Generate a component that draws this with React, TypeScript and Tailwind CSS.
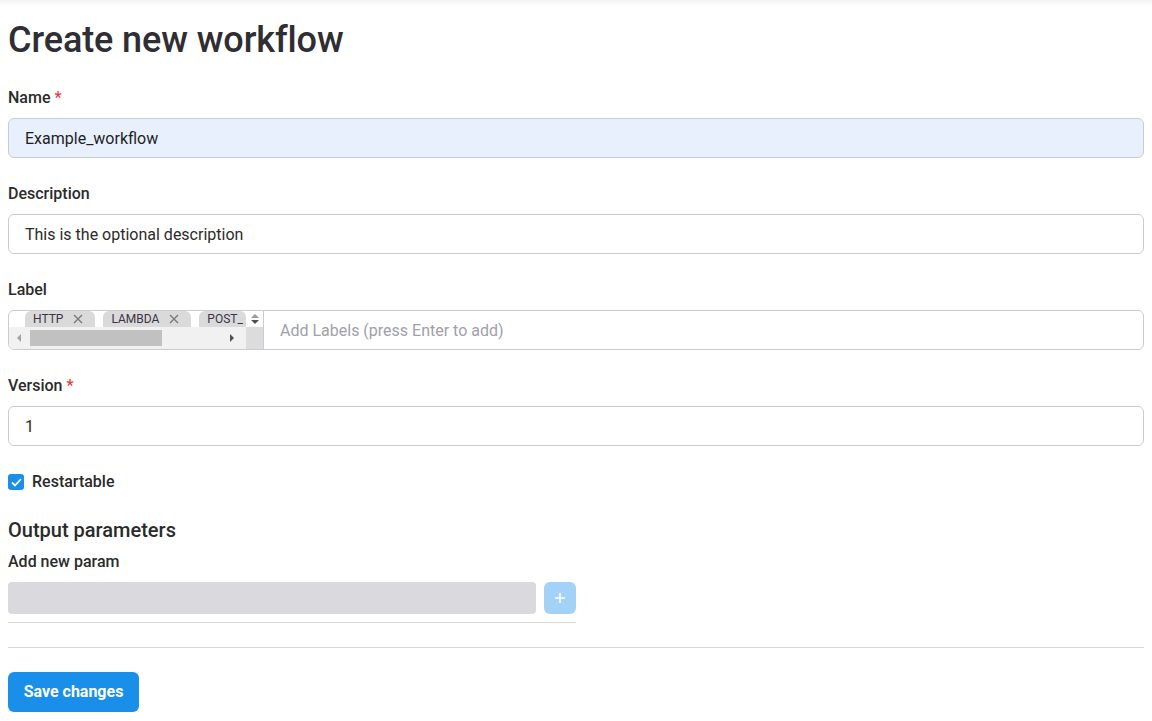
import React from "react";

function Tag({ label, clip }: { label: string; clip?: boolean }) {
  return (
    <div
      className={
        "flex h-[16px] shrink-0 items-center rounded-t-[6px] bg-[#dadada] pl-[8px] text-[12px] leading-none text-[#3b3345] " +
        (clip ? "w-[47px] overflow-hidden" : "pr-[12px]")
      }
    >
      <span>{label}</span>
      {!clip && (
        <svg width="10" height="10" viewBox="0 0 10 10" className="ml-[10px]">
          <path d="M1 1 L9 9 M9 1 L1 9" stroke="#7a7a7a" strokeWidth="1.4" />
        </svg>
      )}
    </div>
  );
}

function Field({
  label,
  required,
  children,
}: {
  label: string;
  required?: boolean;
  children: React.ReactNode;
}) {
  return (
    <div className="flex flex-col">
      <div className="flex h-[24px] items-center text-[16px] font-medium text-[#2b2b2b]">
        {label}
        {required && <span className="ml-[4px] text-[#e5383b]">*</span>}
      </div>
      <div className="mt-[8px]">{children}</div>
    </div>
  );
}

export default function App() {
  return (
    <div
      className="relative min-h-[721px] w-full bg-white"
      style={{ fontFamily: "Roboto, 'Noto Sans', Arial, sans-serif" }}
    >
      <div className="absolute left-0 right-0 top-0 h-[6px] bg-gradient-to-b from-[#f3f3f3] to-white" />
      <div className="relative flex flex-col pl-[8px] pr-[8px] pt-[18px]">
        <h1 className="h-[44px] text-[36px] font-medium leading-[44px] tracking-[-0.1px] text-[#2e2e33]">
          Create new workflow
        </h1>

        <div className="mt-[24px] flex flex-col gap-[24px]">
          <Field label="Name" required>
            <div className="flex h-[40px] items-center rounded-[6px] border border-[#c9ccd1] bg-[#e8f0fe] pl-[16px] pt-[1px] text-[16px] text-[#1f1f1f]">
              Example_workflow
            </div>
          </Field>

          <Field label="Description">
            <div className="flex h-[40px] items-center rounded-[6px] border border-[#c9ccd1] bg-white pl-[16px] pt-[1px] text-[16px] text-[#2b2b2b]">
              This is the optional description
            </div>
          </Field>

          <Field label="Label">
            <div className="flex h-[40px] overflow-hidden rounded-[6px] border border-[#c9ccd1] bg-white">
              <div className="flex w-[255px] shrink-0 border-r border-[#c9ccd1]">
                <div className="flex w-[237px] flex-col">
                  <div className="flex h-[16px] gap-[8px] overflow-hidden pl-[16px]">
                    <Tag label="HTTP" />
                    <Tag label="LAMBDA" />
                    <Tag label="POST_" clip />
                  </div>
                  <div className="relative flex flex-1 items-center bg-[#f1f1f1]">
                    <svg width="6" height="8" viewBox="0 0 6 8" className="absolute left-[7px]">
                      <path d="M5 0 L1 4 L5 8 Z" fill="#a3a3a3" />
                    </svg>
                    <div className="absolute left-[21px] h-[16px] w-[132px] bg-[#c1c1c1]" />
                    <svg width="6" height="8" viewBox="0 0 6 8" className="absolute left-[220px]">
                      <path d="M1 0 L5 4 L1 8 Z" fill="#505050" />
                    </svg>
                  </div>
                </div>
                <div className="flex flex-1 flex-col">
                  <div className="flex h-[16px] flex-col items-center justify-center gap-[2px] bg-white">
                    <svg width="8" height="4" viewBox="0 0 8 4">
                      <path d="M0 4 L4 0 L8 4 Z" fill="#9a9a9a" />
                    </svg>
                    <svg width="8" height="4" viewBox="0 0 8 4">
                      <path d="M0 0 L4 4 L8 0 Z" fill="#505050" />
                    </svg>
                  </div>
                  <div className="flex-1 bg-[#dcdcdc]" />
                </div>
              </div>
              <div className="flex flex-1 items-center pl-[16px] pt-[1px] text-[16px] text-[#a0a0a8]">
                Add Labels (press Enter to add)
              </div>
            </div>
          </Field>

          <Field label="Version" required>
            <div className="flex h-[40px] items-center rounded-[6px] border border-[#c9ccd1] bg-white pl-[16px] pt-[1px] text-[16px] text-[#2b2b2b]">
              1
            </div>
          </Field>

          <div className="flex h-[24px] items-center">
            <div className="flex h-[16px] w-[16px] items-center justify-center rounded-[3px] bg-[#1a8ee8]">
              <svg width="11" height="9" viewBox="0 0 11 9">
                <path d="M1 4.5 L4 7.5 L10 1" stroke="white" strokeWidth="1.8" fill="none" />
              </svg>
            </div>
            <span className="ml-[8px] text-[16px] font-medium text-[#2b2b2b]">Restartable</span>
          </div>
        </div>

        <h2 className="mt-[22px] h-[28px] text-[20px] font-medium leading-[28px] text-[#2b2b2b]">
          Output parameters
        </h2>
        <div className="mt-[6px] flex h-[24px] items-center text-[16px] font-medium text-[#2b2b2b]">
          Add new param
        </div>
        <div className="mt-[8px] w-[568px]">
          <div className="flex gap-[8px]">
            <div className="h-[32px] w-[528px] rounded-[4px] bg-[#d9d9de]" />
            <div className="flex h-[32px] w-[32px] items-center justify-center rounded-[6px] bg-[#a4d2f6]">
              <svg width="12" height="12" viewBox="0 0 12 12">
                <path d="M6 1 V11 M1 6 H11" stroke="white" strokeWidth="1.5" />
              </svg>
            </div>
          </div>
          <div className="mt-[8px] h-[1px] bg-[#d6d6d6]" />
        </div>
        <div className="mt-[24px] h-[1px] bg-[#d6d6d6]" />
        <div className="mt-[24px]">
          <button className="h-[40px] w-[131px] rounded-[6px] bg-[#1a8fe9] text-[16px] font-bold text-white">
            Save changes
          </button>
        </div>
      </div>
    </div>
  );
}
